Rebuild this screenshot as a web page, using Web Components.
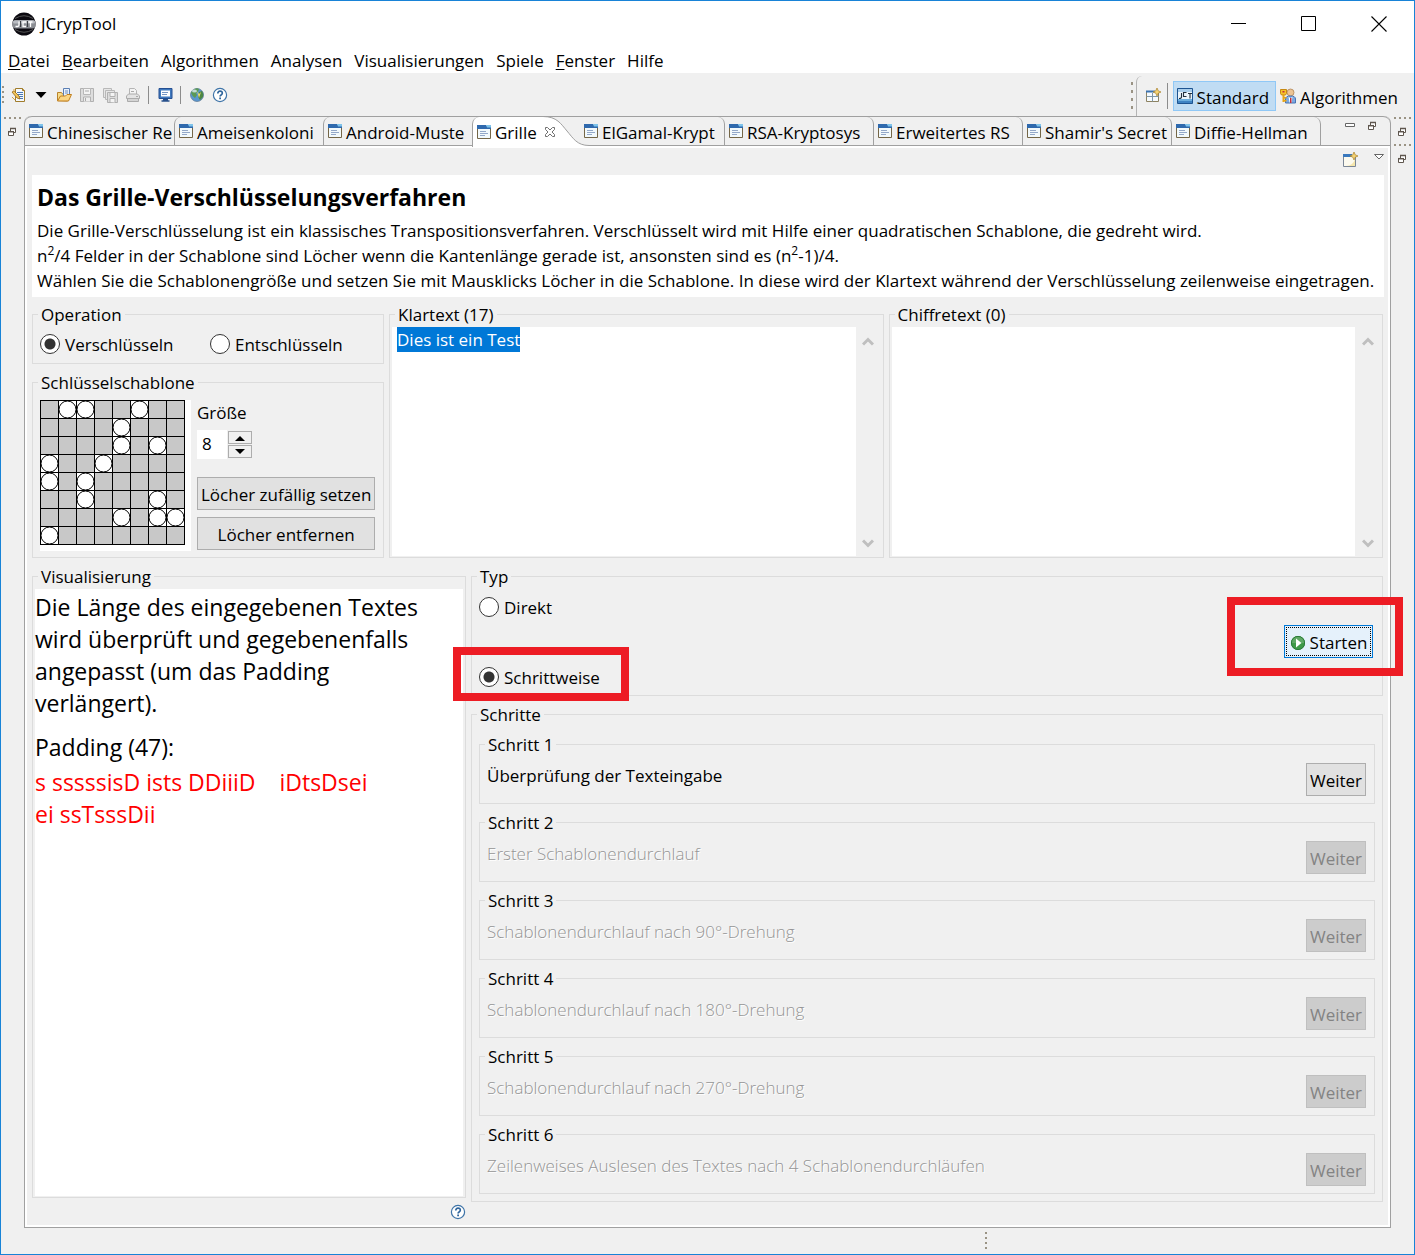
<!DOCTYPE html>
<html lang="de">
<head>
<meta charset="utf-8">
<title>JCrypTool</title>
<style>
  html, body { margin: 0; height: 100%; }
  body {
    font-family: "Open Sans", "Noto Sans", sans-serif;
    font-size: 17px;
    line-height: 22px;
    color: #000;
    background: #f0f0f0;
  }
</style>
</head>
<body>
<jct-window></jct-window>

<script>
const ICONS = {
  logo: [24, 24, '<circle cx="12" cy="12" r="11.5" fill="#0b0910"/><path d="M3 6.5Q12 1 21 6.5M3 17.5Q12 23 21 17.5" stroke="#555" fill="none"/><rect x=".5" y="8" width="23" height="8.5" rx="3" fill="#8b8e94"/><rect x="1" y="8.5" width="22" height="3" rx="1.5" fill="#b9bcc2"/><path d="M7 9.500v3.500q0 1.500-1.500 1.500h-2M14 10h-3v4.500h3M16.500 10h4M18.500 10v5" stroke="#fff" stroke-width="1.300" fill="none"/><path d="M8.500 9v6M15.500 9v6" stroke="#3d4046"/>'],
  create: [16, 16, '<path d="M5.500 1.500h7l2 2v11h-9z" fill="#f4f8fd" stroke="#a07c2c"/><path d="M12.500 1.500v2h2" fill="#d9b45c" stroke="#a07c2c"/><path d="M7 5.500h6M7 7.500h6M9 9.500h4M9 11.500h4" stroke="#4a79b5"/><path d="M2 5l2-1 5 5 1 3-3-1z" fill="#f1c55a" stroke="#94661c" stroke-width=".8"/><path d="M2 10l3 3M4 2v3" stroke="#d8a43a"/>'],
  caret: [16, 16, '<path d="M2.500 5h11l-5.500 6z" fill="#000"/>'],
  open: [16, 16, '<path d="M1.500 13.500v-8h4l1 1.500h5v7z" fill="#f7dc8b" stroke="#b9832b"/><path d="M7.500 1.500h6v8h-6z" fill="#e9f1fb" stroke="#5b7fb4"/><path d="M9 4h3M9 6h3" stroke="#6c8fc2"/><path d="M1.500 14l3-5h5l1.500-1.500h4.500l-3 6.500z" fill="#fbd683" stroke="#c07f1f"/>'],
  save: [16, 16, '<path d="M1.500 1.500h13v13h-13z" fill="#ddd" stroke="#b1b1b1"/><path d="M4.500 1.500h7v6h-7z" fill="#f4f4f4" stroke="#b8b8b8"/><path d="M4.500 14.500v-4.500h7v4.500" fill="#eee" stroke="#b1b1b1"/><path d="M6.500 11v3M6 4h4" stroke="#aaa"/>'],
  saveall: [16, 16, '<path d="M1.500 1.500h8v9h-8z" fill="#e6e6e6" stroke="#b8b8b8"/><path d="M3.500 3.500h9v9h-9z" fill="#e6e6e6" stroke="#b8b8b8"/><path d="M5.500 5.500h10v10h-10z" fill="#ddd" stroke="#b1b1b1"/><path d="M8 5.500h5v4h-5zM8 15v-3.500h5v4" fill="#f4f4f4" stroke="#b1b1b1"/>'],
  print: [16, 16, '<path d="M4.500 7V1.500h5l2 2V7" fill="#f3f3f3" stroke="#b5b5b5"/><path d="M1.500 11.500V9l2-2h9l2 2v2.500z" fill="#e3e3e3" stroke="#ababab"/><path d="M2.500 11.500h11v3h-11z" fill="#d4d4d4" stroke="#ababab"/><path d="M6 4.500h3M11 9.500h2" stroke="#aaa"/>'],
  monitor: [16, 16, '<path d="M2 1.500h13v10H2z" fill="#3f78bd" stroke="#244f92"/><path d="M4 3.500h9v6H4z" fill="#fff"/><path d="M5 5.500h6M5 7.500h5" stroke="#7697c6"/><path d="M6 12.500h5M4.500 14h8" stroke="#27508c" stroke-width="1.500"/>'],
  globe: [16, 16, '<circle cx="8" cy="8" r="6.500" fill="#5a97cf" stroke="#56738f" stroke-width=".7"/><path d="M3 4q4-4 7-2l-1 3-2 1 1 2-2 3q-3-2-4-5z" fill="#5c9a55"/><path d="M10 5l3-1q2 3 1 6l-3 3-2-3z" fill="#4c8744"/><path d="M8 4l2 3 2-2-2 6z" fill="#ebdc72"/><ellipse cx="5.500" cy="4" rx="2.500" ry="1.500" fill="#e4f2fd" opacity=".75"/>'],
  help: [16, 16, '<circle cx="8" cy="8" r="6.600" fill="#fff" stroke="#3f74a8" stroke-width="1.200"/><path d="M5.800 6.500q0-2.300 2.300-2.300t2.200 2q0 1-1.200 1.700-1 .6-1 1.600" fill="none" stroke="#2f659c" stroke-width="1.700"/><path d="M7.200 10.600h1.800v1.600H7.200z" fill="#2f659c"/>'],
  perspective: [16, 16, '<path d="M1.500 3.500h12v10h-12z" fill="#f6fafd" stroke="#8d8362"/><path d="M1 3.500h9" stroke="#3c74b2" stroke-width="2"/><path d="M7.500 5v8.500M1.500 8.500h12" stroke="#7f97a8"/><path d="M12 0l1.200 2.800L16 4l-2.800 1.200L12 8l-1.200-2.800L8 4l2.800-1.200z" fill="#f4d375" stroke="#a9812a" stroke-width=".7"/>'],
  standard: [16, 16, '<path d="M.5.5h15v15H.5z" fill="#3f83c3" stroke="#1e5491"/><path d="M1 1h14v4H1z" fill="#a8cdeb"/><path d="M1 11h14v2H1z" fill="#6caedd"/><path d="M1 4h14v7H1z" fill="#eaf4fb"/><path d="M4.500 5v4q0 1.500-2.500 1.500M9.500 4.500h-3v4h3M11 5.500h4M13 5.500v5" stroke="#222f3d" stroke-width="1.100" fill="none"/>'],
  algo: [16, 16, '<circle cx="10.500" cy="4.500" r="3.500" fill="#ecc393" stroke="#a77a4a" stroke-width=".7"/><path d="M5.500 15v-4q0-3 5-3t5 3v4z" fill="#7ba9e2" stroke="#4772b3"/><path d="M8.500 8.500l2 2 2-2-1 6h-2z" fill="#fff"/><path d="M10 10h1.500v5H10z" fill="#c12f3b"/><path d="M.5 1.500h6v4l-1 1.500h-4l-1-1.500z" fill="#f5c22a" stroke="#c78812"/><path d="M2.500 7h2v7h-2zM4.500 9h2v1.500h-2zM4.500 12h2v1.500h-2z" fill="#e7a516"/><path d="M2.500 3h2v1.500h-2z" fill="#c12f3b"/>'],
  page: [16, 16, '<path d="M1.500 3.500h13v11h-13z" fill="#f2f9fc" stroke="#746647"/><path d="M1 1h9l1 1h4v3H1z" fill="#2f69ad"/><path d="M10 1h5v2.500h-4z" fill="#7fc3ea"/><path d="M4 7.500h6M4 9.500h8M4 11.500h5" stroke="#93a8c9"/>'],
  close: [12, 12, '<path d="M1.500 1.500h2l2.500 2.500 2.500-2.500h2v2l-2.500 2.500 2.500 2.500v2h-2l-2.500-2.500-2.500 2.500h-2v-2l2.500-2.500-2.500-2.500z" fill="#fff" stroke="#707070"/>'],
  restore: [10, 10, '<path d="M3.500 1.500h5v4h-5z" fill="#fff" stroke="#5e564e"/><path d="M3 1.500h6" stroke="#5e564e" stroke-width="1.500"/><path d="M1.500 4.500h5v4h-5z" fill="#fff" stroke="#5e564e"/><path d="M1 4.700h6" stroke="#5e564e" stroke-width="1.500"/>'],
  minview: [12, 10, '<path d="M1.500 2.500h9v3h-9z" fill="#fff" stroke="#666"/>'],
  newview: [16, 16, '<path d="M1.500 3.500h12v11h-12z" fill="#fcfaef" stroke="#7b8796"/><path d="M1 3.500h9" stroke="#3a78bd" stroke-width="3"/><path d="M4 14q7 0 9-7v7z" fill="#f5e6ac"/><path d="M12 0l1.200 2.800L16 4l-2.800 1.200L12 8l-1.200-2.800L8 4l2.800-1.200z" fill="#f4d375" stroke="#a9812a" stroke-width=".7"/>'],
  viewmenu: [12, 10, '<path d="M1.500 2.500h9L6 7z" fill="#fff" stroke="#666"/>'],
  play: [16, 16, '<circle cx="8" cy="8" r="7" fill="#3f9a48"/><path d="M1 8a7 7 0 0 1 14 0z" fill="#5fa965"/><circle cx="8" cy="8" r="6.600" fill="none" stroke="#2b7b39"/><path d="M6 3.500L11.500 8 6 12.500z" fill="#fff"/>'],
  up: [12, 12, '<path d="M1 8.500L6 3.500l5 5" fill="none" stroke="#bfbfbf" stroke-width="3"/>'],
  down: [12, 12, '<path d="M1 3.500l5 5 5-5" fill="none" stroke="#bfbfbf" stroke-width="3"/>'],
  spinup: [10, 6, '<path d="M0 6h10L5 1z" fill="#000"/>'],
  spindown: [10, 6, '<path d="M0 0h10L5 5z" fill="#000"/>'],
  winmin: [16, 16, '<path d="M0 7.500h15" stroke="#000"/>'],
  winmax: [16, 16, '<path d="M.5.500h14v14H.5z" fill="none" stroke="#000"/>'],
  winclose: [16, 16, '<path d="M.5.500l15 15M15.500.500l-15 15" stroke="#000" stroke-width="1.100"/>']
};

function define(name, html, setup) {
  const template = document.createElement('template');
  template.innerHTML = '<style>*{box-sizing:border-box}button,input,textarea{font:inherit;color:inherit;margin:0}slot{display:contents}</style>' + html;
  customElements.define(name, class extends HTMLElement {
    connectedCallback() {
      if (this.shadowRoot) return;
      this.attachShadow({ mode: 'open' }).append(template.content.cloneNode(true));
      if (setup) setup(this, this.shadowRoot);
    }
  });
}

define('jct-icon', '<style>:host{display:inline-flex;flex:none}svg{display:block}</style>', (el, root) => {
  const [w, h, body] = ICONS[el.getAttribute('name')];
  root.innerHTML += `<svg width="${w}" height="${h}" viewBox="0 0 ${w} ${h}" aria-hidden="true">${body}</svg>`;
});

define('title-bar', `
<style>
  :host { display: flex; align-items: center; height: 45px; padding-left: 11px; background: #fff; }
  h1 { flex: 1; margin: 0 0 0 5px; font-size: 17px; font-weight: 400; line-height: 22px; }
  button { width: 70px; height: 45px; display: flex; align-items: center; justify-content: center; border: 0; padding: 0; background: none; }
</style>
<jct-icon name="logo"></jct-icon><h1><slot></slot></h1>
<button aria-label="Minimieren"><jct-icon name="winmin"></jct-icon></button>
<button aria-label="Maximieren"><jct-icon name="winmax"></jct-icon></button>
<button aria-label="Schließen"><jct-icon name="winclose"></jct-icon></button>`);

define('menu-bar', `
<style>
  :host { display: flex; gap: 12px; height: 27px; padding: 2px 7px 0; background: #fff; }
  button { border: 0; padding: 0; background: none; line-height: 26px; }
  u { text-underline-offset: 2px; }
</style>
<button><u>D</u>atei</button><button><u>B</u>earbeiten</button><button>Algorithmen</button><button>Analysen</button>
<button>Visualisierungen</button><button>Spiele</button><button><u>F</u>enster</button><button>Hilfe</button>`);

define('dot-handle', `
<style>
  :host { display: block; flex: none; width: 2px; height: 18px; background: repeating-linear-gradient(#9a9384 0 2px, transparent 2px 5px); }
  :host([flat]) { width: 17px; height: 2px; background: repeating-linear-gradient(90deg, #9a9384 0 2px, transparent 2px 5px); }
  :host([tall]) { height: 28px; background: repeating-linear-gradient(#9a9384 0 3px, transparent 3px 8px); }
</style>`);

define('tool-button', `
<style>
  :host { display: block; }
  button { width: var(--tool-width, 23px); height: 24px; border: 0; padding: 0; background: none; display: flex; align-items: center; justify-content: center; }
</style>
<button></button>`, (el, root) => {
  const button = root.querySelector('button');
  button.setAttribute('aria-label', el.getAttribute('label'));
  button.disabled = el.hasAttribute('disabled');
  const icon = document.createElement('jct-icon');
  icon.setAttribute('name', el.getAttribute('icon'));
  button.append(icon);
});

define('perspective-button', `
<style>
  :host { display: block; }
  button { display: flex; align-items: center; gap: 4px; height: 30px; border: 1px solid transparent; padding: 4px 6px 0 3px; background: none; white-space: nowrap; }
  jct-icon { margin-top: -4px; }
  :host([selected]) button { background: #c0dcf3; border-color: #90c8f6; }
</style>
<button><span></span><slot></slot></button>`, (el, root) => {
  const icon = document.createElement('jct-icon');
  icon.setAttribute('name', el.getAttribute('icon'));
  root.querySelector('span').replaceWith(icon);
});

define('main-toolbar', `
<style>
  :host { display: flex; align-items: center; height: 43px; padding: 0 9px 0 1px; }
  i { flex: none; width: 1px; height: 18px; margin: 0 4px; background: #8c8c8c; }
  .tools { display: flex; align-items: center; flex: 1; padding-left: 2px; }
  .persp { display: flex; align-items: center; height: 100%; padding-top: 2px; }
  .edge { width: 6px; height: 40px; margin-left: 3px; border-left: 1px solid #b4b4b4; border-top-left-radius: 6px; }
  .tall { height: 26px; margin: 0 5px 0 2px; }
</style>
<dot-handle></dot-handle>
<div class="tools">
  <tool-button icon="create" label="Neu"></tool-button>
  <tool-button icon="caret" label="Neu, Auswahl"></tool-button>
  <tool-button icon="open" label="Öffnen"></tool-button>
  <tool-button icon="save" label="Speichern" disabled></tool-button>
  <tool-button icon="saveall" label="Alle speichern" disabled></tool-button>
  <tool-button icon="print" label="Drucken" disabled></tool-button>
  <i></i>
  <tool-button icon="monitor" label="Ansicht"></tool-button>
  <i></i>
  <tool-button icon="globe" label="Web"></tool-button>
  <tool-button icon="help" label="Hilfe"></tool-button>
</div>
<div class="persp">
  <dot-handle tall></dot-handle><span class="edge"></span>
  <tool-button icon="perspective" label="Perspektive öffnen"></tool-button>
  <i class="tall"></i>
  <perspective-button icon="standard" selected>Standard</perspective-button>
  <perspective-button icon="algo">Algorithmen</perspective-button>
</div>`);

define('side-trim', `
<style>
  :host { display: flex; flex-direction: column; align-items: center; flex: none; width: 23px; padding: 1px 1px 0 0; gap: 8px; }
</style>
<slot></slot>`);

define('trim-button', `
<style>
  :host { display: flex; flex-direction: column; align-items: center; gap: 8px; height: 19px; }
  button { border: 0; padding: 0; background: none; display: block; line-height: 0; }
</style>
<dot-handle flat></dot-handle><button aria-label="Wiederherstellen"><jct-icon name="restore"></jct-icon></button>`);

define('editor-tab', `
<style>
  :host { display: block; flex: none; width: 149px; }
  button { position: relative; display: flex; align-items: center; gap: 3px; width: 100%; height: 29px; border: 0 solid #a0a0a0; padding: 2px 0 0 3px; background: none; text-align: left; white-space: nowrap; }
  jct-icon { margin-top: -3px; }
  :host([side="left"]) button { border-left-width: 1px; border-top-left-radius: 7px; }
  :host([side="right"]) button { border-right-width: 1px; border-top-right-radius: 7px; }
  :host(:not([selected])) { border-bottom: 1px solid #a0a0a0; }
  :host([selected]) { width: 104px; }
  :host([selected]) button { height: 30px; border-left-width: 1px; border-top-left-radius: 7px; background: #fff; }
  .curve, .shut { display: none; }
  :host([selected]) .shut { display: inline-flex; margin-left: 4px; }
  :host([selected]) .curve { display: block; position: absolute; left: 70px; top: -1px; z-index: 0; }
  .text, .shut { position: relative; z-index: 1; }
</style>
<button role="tab"><svg class="curve" width="46" height="31" viewBox="0 0 46 31"><path d="M0 1h46v29.500H0z" fill="#f0f0f0"/><path d="M0 1C14 1 18 8 24 15S34 29.500 46 29.500V31H0z" fill="#fff"/><path d="M0 .500C14 .500 18 8 24 15S34 29.500 46 29.500" fill="none" stroke="#a0a0a0"/></svg><jct-icon class="icon" name="page"></jct-icon><span class="text"><slot></slot></span><jct-icon class="shut" name="close"></jct-icon></button>`, (el, root) => {
  root.querySelector('button').setAttribute('aria-selected', el.hasAttribute('selected'));
});

define('tab-strip', `
<style>
  :host { display: flex; height: 30px; border-top: 1px solid #a0a0a0; border-radius: 7px 7px 0 0; }
  .rest { flex: 1; display: flex; justify-content: flex-end; gap: 11px; padding: 4px 13px 0 0; border-bottom: 1px solid #a0a0a0; }
  button { border: 0; padding: 0; background: none; line-height: 0; height: 10px; }
  ::slotted(editor-tab[wide]) { padding-left: 4px; }
</style>
<slot></slot>
<div class="rest"><button aria-label="Minimieren"><jct-icon name="minview"></jct-icon></button><button aria-label="Wiederherstellen"><jct-icon name="restore"></jct-icon></button></div>`);

define('group-box', `
<style>
  :host { display: flex; min-width: 0; }
  fieldset { flex: 1; display: flex; flex-direction: column; min-width: 0; margin: 0; padding: 0; border: 1px solid #dcdcdc; }
  legend { margin-left: 5px; padding: 2px 3px 0; }
</style>
<fieldset><legend></legend><slot></slot></fieldset>`, (el, root) => {
  root.querySelector('legend').textContent = el.getAttribute('label');
});

define('push-button', `
<style>
  :host { display: block; position: relative; flex: none; }
  button { width: 100%; height: 33px; border: 1px solid #adadad; padding: 2px 3px 0; background: #e1e1e1; display: flex; align-items: center; justify-content: center; gap: 4px; white-space: nowrap; }
  button:disabled { background: #ccc; border-color: #bfbfbf; color: #838383; }
  :host([primary]) button { background: #e5f1fb; border-color: #0078d7; outline: 1px dotted #000; outline-offset: -3px; }
</style>
<button><slot></slot></button>`, (el, root) => {
  root.querySelector('button').disabled = el.hasAttribute('disabled');
});

define('radio-option', `
<style>
  :host { display: flex; }
  label { display: flex; align-items: center; gap: 5px; }
  input { appearance: none; width: 20px; height: 20px; border: 1px solid #333; border-radius: 50%; background: #fff; }
  input:checked { background: radial-gradient(circle, #333 0 5px, #fff 6px); }
  span { padding-top: 2px; }
</style>
<label><input type="radio"><span><slot></slot></span></label>`, (el, root) => {
  root.querySelector('input').checked = el.hasAttribute('checked');
});

define('mark-frame', `
<style>
  :host { display: block; position: relative; }
  div { position: absolute; inset: var(--reach); border: 8px solid #ed1c24; pointer-events: none; z-index: 5; }
</style>
<slot></slot><div></div>`);

define('intro-panel', `
<style>
  :host { display: block; background: #fff; padding: 6px 5px 4px; }
  h2 { margin: 0 0 5px; font-size: 23px; line-height: 32px; font-weight: 700; }
  p { margin: 0; line-height: 25px; }
  sup { font-size: 12px; line-height: 0; }
</style>
<h2>Das Grille-Verschlüsselungsverfahren</h2>
<p>Die Grille-Verschlüsselung ist ein klassisches Transpositionsverfahren. Verschlüsselt wird mit Hilfe einer quadratischen Schablone, die gedreht wird.<br>
n<sup>2</sup>/4 Felder in der Schablone sind Löcher wenn die Kantenlänge gerade ist, ansonsten sind es (n<sup>2</sup>-1)/4.<br>
Wählen Sie die Schablonengröße und setzen Sie mit Mausklicks Löcher in die Schablone. In diese wird der Klartext während der Verschlüsselung zeilenweise eingetragen.</p>`);

define('grille-grid', `
<style>:host { display: block; flex: none; width: 151px; height: 151px; background: #fff; } svg { display: block; }</style>`, (el, root) => {
  const rows = ['.oo..o..', '....o...', '....o.o.', 'o..o....', 'o.o.....', '..o...o.', '....o.oo', 'o.......'];
  let body = '';
  rows.forEach((row, y) => [...row].forEach((c, x) => {
    body += `<rect x="${x * 18 + .5}" y="${y * 18 + .5}" width="18" height="18" fill="${c === 'o' ? '#fff' : '#c8c8c8'}" stroke="#000"/>`;
  }));
  rows.forEach((row, y) => [...row].forEach((c, x) => {
    if (c === 'o') body += `<circle cx="${x * 18 + 9.5}" cy="${y * 18 + 9.5}" r="8.500" fill="#fff" stroke="#000"/>`;
  }));
  root.innerHTML += `<svg width="145" height="145" role="img" aria-label="Schablone">${body}</svg>`;
});

define('size-spinner', `
<style>
  :host { display: block; }
  label { display: block; }
  .row { display: flex; gap: 1px; margin-top: 6px; }
  input { width: 30px; height: 29px; border: 0; padding: 0 5px 2px; background: #fff; appearance: none; }
  .steps { display: flex; flex-direction: column; gap: 1px; padding-top: 1px; }
  button { width: 24px; height: 13px; border: 1px solid #adadad; padding: 0; background: #f0f0f0; display: flex; align-items: center; justify-content: center; }
</style>
<label for="size">Größe</label>
<div class="row"><input id="size" type="text" inputmode="numeric" value="8"><span class="steps"><button aria-label="Größer"><jct-icon name="spinup"></jct-icon></button><button aria-label="Kleiner"><jct-icon name="spindown"></jct-icon></button></span></div>`);

define('text-pane', `
<style>
  :host { flex: 1; display: flex; padding: 1px 2px; }
  textarea { flex: 1; min-width: 0; resize: none; border: 0; outline: 0; padding: 0 5px; background: #fff; line-height: 25px; display: block; overflow: hidden; }
  textarea::selection { background: #0078d7; color: #fff; }
  .bar { width: 25px; display: flex; flex-direction: column; justify-content: space-between; align-items: center; padding: 9px 0 7px; }
  button { border: 0; padding: 0; background: none; line-height: 0; }
</style>
<textarea spellcheck="false"></textarea>
<div class="bar"><button aria-label="Nach oben"><jct-icon name="up"></jct-icon></button><button aria-label="Nach unten"><jct-icon name="down"></jct-icon></button></div>`, (el, root) => {
  const area = root.querySelector('textarea');
  area.setAttribute('aria-label', el.getAttribute('label'));
  area.value = el.getAttribute('value') || '';
});

define('step-box', `
<style>
  :host { display: block; }
  .row { display: flex; align-items: flex-start; justify-content: space-between; gap: 12px; padding: 7px 8px 7px 7px; }
  .text { padding-top: 2px; }
  :host([disabled]) .text { color: #959595; text-shadow: 1px 1px #fff; font-weight: 300; }
  push-button { width: 60px; }
</style>`, (el, root) => {
  const off = el.hasAttribute('disabled');
  const box = document.createElement('group-box');
  const button = document.createElement('push-button');
  button.textContent = 'Weiter';
  button.toggleAttribute('disabled', off);
  box.setAttribute('label', el.getAttribute('label'));
  const row = document.createElement('div');
  row.className = 'row';
  row.innerHTML = '<span class="text"><slot></slot></span>';
  row.append(button);
  box.append(row);
  root.append(box);
});

define('visual-panel', `
<style>
  :host { flex: 1; display: block; background: #fff; margin: 1px 2px; padding: 2px 0 0; font-size: 23px; line-height: 32px; }
  p { margin: 0; white-space: pre; }
  p + p { margin-top: 12px; }
  p.pad { margin-top: 3px; color: #f00; }
</style>
<p>Die Länge des eingegebenen Textes
wird überprüft und gegebenenfalls
angepasst (um das Padding
verlängert).</p><p>Padding (47):</p><p class="pad">s sssssisD ists DDiiiD    iDtsDsei
ei ssTsssDii</p>`);

define('grille-view', `
<style>
  :host { display: flex; flex-direction: column; flex: 1; padding: 0 4px 5px 5px; }
  .bar { --tool-width: 18px; display: flex; justify-content: flex-end; gap: 11px; height: 27px; margin-right: -4px; }
  .bar tool-button + tool-button { margin-top: -3px; }
  .inputs { display: grid; grid-template-columns: 352px minmax(0, 1fr) minmax(0, 1fr); gap: 5px; margin: 5px 1px 0 0; height: 256px; }
  .stack { display: flex; flex-direction: column; gap: 6px; }
  .grow { flex: 1; }
  .radios { display: grid; grid-template-columns: 170px 1fr; padding: 6px 7px 7px; }
  .key { display: flex; gap: 5px; padding: 6px 7px; }
  .keys { flex: 1; display: flex; flex-direction: column; gap: 7px; padding: 2px 1px 0 1px; }
  size-spinner { margin-bottom: 11px; }
  .work { display: grid; grid-template-columns: minmax(0, 434fr) minmax(0, 912fr); gap: 5px; flex: 1; margin: 6px 1px 0 0; }
  .help { align-self: flex-end; height: 16px; border: 0; padding: 0; background: none; line-height: 0; }
  .type { display: flex; justify-content: space-between; align-items: center; height: 107px; padding: 0 9px 0 7px; }
  .choices { display: flex; flex-direction: column; gap: 46px; }
  .pick { --reach: -18px -29px -12px -26px; }
  .go { --reach: -28px -30px -18px -57px; }
  .go push-button { width: 89px; }
  .list { display: flex; flex-direction: column; gap: 6px; padding: 6px 7px 7px; }
</style>
<div class="bar"><tool-button icon="newview" label="Neue Ansicht"></tool-button><tool-button icon="viewmenu" label="Menü"></tool-button></div>
<intro-panel></intro-panel>
<div class="inputs">
  <div class="stack">
    <group-box label="Operation"><div class="radios"><radio-option checked>Verschlüsseln</radio-option><radio-option>Entschlüsseln</radio-option></div></group-box>
    <group-box label="Schlüsselschablone" class="grow"><div class="key"><grille-grid></grille-grid><div class="keys"><size-spinner></size-spinner><push-button>Löcher zufällig setzen</push-button><push-button>Löcher entfernen</push-button></div></div></group-box>
  </div>
  <group-box label="Klartext (17)"><text-pane id="plain" label="Klartext" value="Dies ist ein Test"></text-pane></group-box>
  <group-box label="Chiffretext (0)"><text-pane label="Chiffretext"></text-pane></group-box>
</div>
<div class="work">
  <div class="stack">
    <group-box label="Visualisierung" class="grow"><visual-panel></visual-panel></group-box>
    <button class="help" aria-label="Hilfe"><jct-icon name="help"></jct-icon></button>
  </div>
  <div class="stack">
    <group-box label="Typ"><div class="type">
      <div class="choices"><radio-option>Direkt</radio-option><mark-frame class="pick"><radio-option checked>Schrittweise</radio-option></mark-frame></div>
      <mark-frame class="go"><push-button primary><jct-icon name="play"></jct-icon>Starten</push-button></mark-frame>
    </div></group-box>
    <group-box label="Schritte"><div class="list">
      <step-box label="Schritt 1">Überprüfung der Texteingabe</step-box>
      <step-box label="Schritt 2" disabled>Erster Schablonendurchlauf</step-box>
      <step-box label="Schritt 3" disabled>Schablonendurchlauf nach 90°-Drehung</step-box>
      <step-box label="Schritt 4" disabled>Schablonendurchlauf nach 180°-Drehung</step-box>
      <step-box label="Schritt 5" disabled>Schablonendurchlauf nach 270°-Drehung</step-box>
      <step-box label="Schritt 6" disabled>Zeilenweises Auslesen des Textes nach 4 Schablonendurchläufen</step-box>
    </div></group-box>
  </div>
</div>`, (el, root) => {
  const area = root.querySelector('#plain').shadowRoot.querySelector('textarea');
  area.focus({ preventScroll: true });
  area.select();
});

define('status-bar', `
<style>:host { display: flex; height: 26px; padding: 4px 427px 0 0; justify-content: flex-end; }</style>
<dot-handle></dot-handle>`);

define('jct-window', `
<style>
  :host { display: flex; flex-direction: column; min-height: 100vh; box-sizing: border-box; border: 1px solid #1883d7; background: #f0f0f0; }
  .bench { flex: 1; display: flex; }
  .editor { flex: 1; min-width: 0; display: flex; flex-direction: column; border: 1px solid #a0a0a0; border-top: 0; border-radius: 7px 7px 0 0; }
  .view { flex: 1; display: flex; flex-direction: column; border: 2px solid #fff; }
</style>
<title-bar>JCrypTool</title-bar>
<menu-bar></menu-bar>
<main-toolbar></main-toolbar>
<div class="bench">
  <side-trim><trim-button></trim-button></side-trim>
  <div class="editor">
    <tab-strip role="tablist">
      <editor-tab>Chinesischer Re</editor-tab>
      <editor-tab side="left">Ameisenkoloni</editor-tab>
      <editor-tab side="left">Android-Muste</editor-tab>
      <editor-tab selected>Grille</editor-tab>
      <editor-tab side="right" wide>ElGamal-Krypt</editor-tab>
      <editor-tab side="right">RSA-Kryptosys</editor-tab>
      <editor-tab side="right">Erweitertes RS</editor-tab>
      <editor-tab side="right">Shamir's Secret</editor-tab>
      <editor-tab side="right">Diffie-Hellman</editor-tab>
    </tab-strip>
    <div class="view"><grille-view></grille-view></div>
  </div>
  <side-trim><trim-button></trim-button><trim-button></trim-button></side-trim>
</div>
<status-bar></status-bar>`);
</script>
</body>
</html>
